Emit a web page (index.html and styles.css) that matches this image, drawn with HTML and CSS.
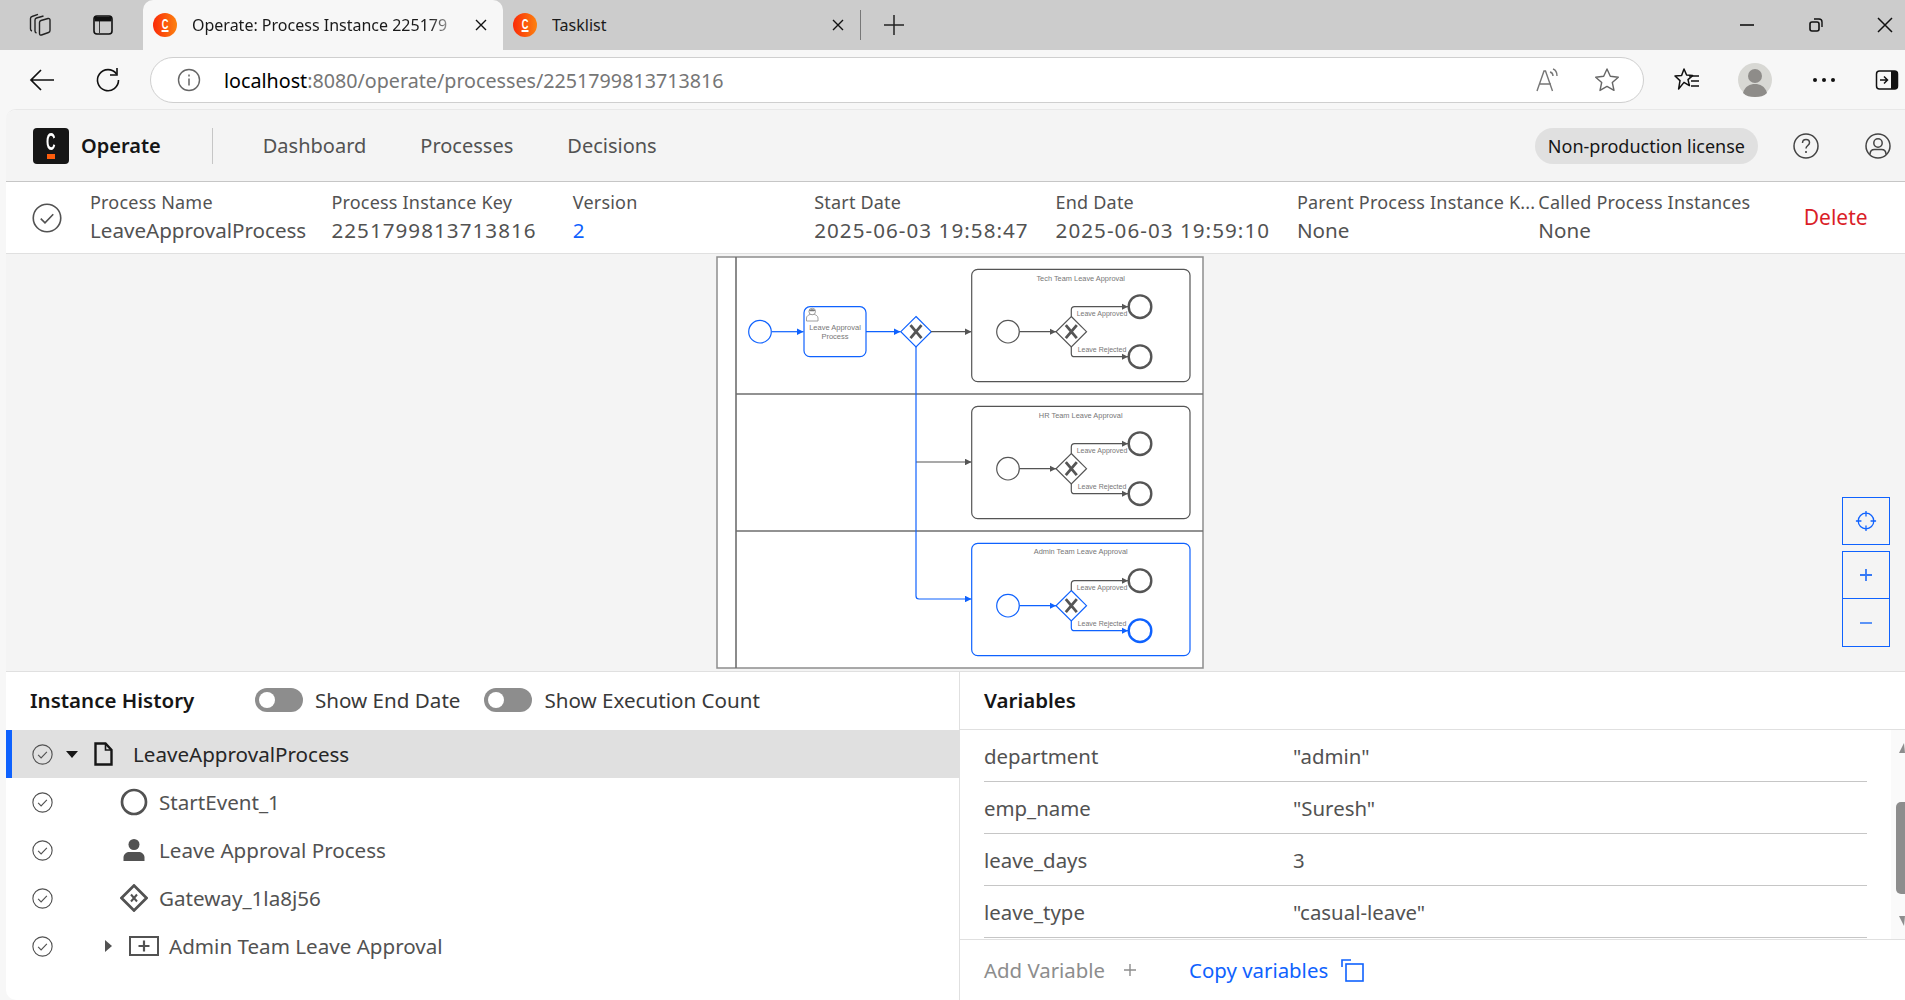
FILE: index.html
```html
<!DOCTYPE html>
<html lang="en">
<head>
    <meta charset="UTF-8">
    <title>Operate: Process Instance 2251799813713816</title>
    <link rel="stylesheet" href="styles.css">
</head>
<body>

<svg class="defs" width="0" height="0">
    <defs>
        <symbol id="check" viewBox="0 0 24 24">
            <circle cx="12" cy="12" r="11" fill="none" stroke="currentColor" stroke-width="1.3"/>
            <path d="M7 12.5l3.4 3.4L17 9" fill="none" stroke="currentColor" stroke-width="1.3"/>
        </symbol>
        <symbol id="camundaFav" viewBox="0 0 24 24">
            <circle cx="12" cy="12" r="12" fill="url(#favGrad)"/>
            <rect x="8.5" y="17" width="7" height="2" fill="#fff"/>
            <text transform="translate(12 15.5) scale(.62 1)" text-anchor="middle" class="favicon-c">C</text>
        </symbol>
        <linearGradient id="favGrad" x1="0" y1="0" x2="1" y2="0">
            <stop offset="0" stop-color="#fb2a08"/>
            <stop offset="1" stop-color="#fc8210"/>
        </linearGradient>
        <marker id="arrowGray" viewBox="0 0 10 10" refX="10" refY="5" markerWidth="6.5" markerHeight="6.5" markerUnits="userSpaceOnUse" orient="auto">
            <path d="M0 0L10 5L0 10z" fill="#555"/>
        </marker>
        <marker id="arrowBlue" viewBox="0 0 10 10" refX="10" refY="5" markerWidth="6.5" markerHeight="6.5" markerUnits="userSpaceOnUse" orient="auto">
            <path d="M0 0L10 5L0 10z" fill="#0f62fe"/>
        </marker>
        <g id="gwCross">
            <path d="M-5.5 -6.5L5.5 6.5M5.5 -6.5L-5.5 6.5" fill="none" stroke="#555" stroke-width="2.8"/>
        </g>
    </defs>
</svg>

<!-- browser chrome -->
<div class="tabbar">
    <div class="tabbar-left">
        <svg class="chrome-icon" viewBox="0 0 24 24"><path d="M12.5 9.5c0-1 .5-1.700 1.500-2l7-2c1.200-.3 2 .4 2 1.500v10.500c0 1-.5 1.700-1.500 2l-7 2.500c-1.200.4-2-.3-2-1.500zM9.500 20c-1-.3-1.500-1-1.500-2V7c0-1 .5-1.700 1.500-2l7-2M5 18c-1-.3-1.500-1-1.500-2V5.500c0-1 .5-1.700 1.500-2l6-2.200" fill="none" stroke="#222" stroke-width="1.4"/></svg>
        <svg class="chrome-icon" viewBox="0 0 24 24"><rect x="3" y="3" width="18" height="18" rx="3" fill="none" stroke="#111" stroke-width="1.6"/><path d="M4 4h16v4H4zM8.500 8v12" fill="#111" stroke="#111" stroke-width=".8"/></svg>
    </div>
    <div class="tab tab-active">
        <svg class="favicon"><use href="#camundaFav"/></svg>
        <span class="tab-title">Operate: Process Instance 225179</span>
        <svg class="tab-x" viewBox="0 0 14 14"><path d="M2 2l10 10M12 2L2 12" stroke="#111" stroke-width="1.4"/></svg>
    </div>
    <div class="tab">
        <svg class="favicon"><use href="#camundaFav"/></svg>
        <span class="tab-title">Tasklist</span>
        <svg class="tab-x" viewBox="0 0 14 14"><path d="M2 2l10 10M12 2L2 12" stroke="#111" stroke-width="1.4"/></svg>
    </div>
    <div class="tab-sep"></div>
    <svg class="new-tab" viewBox="0 0 22 22"><path d="M11 1v20M1 11h20" stroke="#222" stroke-width="1.5"/></svg>
    <div class="window-btns">
        <svg class="win-icon" viewBox="0 0 16 16"><path d="M1 8h14" stroke="#111" stroke-width="1.6"/></svg>
        <svg class="win-icon" viewBox="0 0 16 16"><rect x="2" y="5" width="9" height="9" rx="2" fill="none" stroke="#111" stroke-width="1.6"/><path d="M6 2h5c2 0 3 1 3 3v5" fill="none" stroke="#111" stroke-width="1.4"/></svg>
        <svg class="win-icon" viewBox="0 0 16 16"><path d="M1 1l14 14M15 1L1 15" stroke="#111" stroke-width="1.5"/></svg>
    </div>
</div>

<div class="toolbar">
    <svg class="tool-back" viewBox="0 0 26 24"><path d="M25 12H2M12 2L2 12l10 10" fill="none" stroke="#111" stroke-width="1.7"/></svg>
    <svg class="tool-reload" viewBox="0 0 26 26"><path d="M21.500 7A10.500 10.500 0 1 0 23.500 13" fill="none" stroke="#111" stroke-width="1.6"/><path d="M22 1v7h-7" fill="none" stroke="#111" stroke-width="1.6"/></svg>
    <div class="addressbar">
        <svg class="info-icon" viewBox="0 0 24 24"><circle cx="12" cy="12" r="10.500" fill="none" stroke="#666" stroke-width="1.400"/><path d="M12 10.500v7M12 6.500v2" stroke="#666" stroke-width="1.500"/></svg>
        <span class="url"><span class="url-host">localhost</span>:8080/operate/processes/2251799813713816</span>
        <svg class="read-icon" viewBox="0 0 26 26"><path d="M2 24L9 4h1.500l7 20M5 17h11" fill="none" stroke="#777" stroke-width="1.400"/><path d="M15 5c2 .5 3 2 3 4M18 2c3 1 4 4 4 7" fill="none" stroke="#777" stroke-width="1.400"/></svg>
        <svg class="star-icon" viewBox="0 0 26 26"><path d="M13 2l3.300 7.300 8 .9-6 5.300 1.700 7.900-7-4-7 4 1.700-7.900-6-5.300 8-.9z" fill="none" stroke="#666" stroke-width="1.400" stroke-linejoin="round"/></svg>
    </div>
    <svg class="fav-icon" viewBox="0 0 26 26"><path d="M10 2l2.600 6 6 .6-4.600 4 1.400 6-5.400-3.200L4.600 22l1.400-8.400L1 9l6.600-.6z" fill="none" stroke="#111" stroke-width="1.500" stroke-linejoin="round"/><path d="M15 9h10M17 14h8M17 19h8" stroke="#111" stroke-width="1.500"/></svg>
    <div class="avatar">
        <svg viewBox="0 0 34 34"><circle cx="17" cy="17" r="17" fill="#d8d8d4"/><circle cx="17" cy="13" r="7" fill="#8e8c89"/><path d="M5 30c2-7 7-9 12-9s10 2 12 9c-3 3-7 4-12 4s-9-1-12-4z" fill="#8e8c89"/></svg>
    </div>
    <div class="dots"><i></i><i></i><i></i></div>
    <svg class="side-icon" viewBox="0 0 24 24"><rect x="1.500" y="3" width="21" height="18" rx="3" fill="none" stroke="#111" stroke-width="1.500"/><path d="M16 3h4c1.500 0 3 1 3 3v12c0 2-1.500 3-3 3h-4z" fill="#111"/><path d="M5 12h7M9 8.500l3.500 3.500L9 15.500" fill="none" stroke="#111" stroke-width="1.500"/></svg>
</div>

<!-- page -->
<div class="page">
    <header class="app-header">
        <div class="logo"><span class="logo-c">C</span><span class="logo-bar"></span></div>
        <span class="app-name">Operate</span>
        <div class="header-divider"></div>
        <nav class="main-nav">
            <a href="#">Dashboard</a>
            <a href="#">Processes</a>
            <a href="#">Decisions</a>
        </nav>
        <div class="header-right">
            <span class="license">Non-production license</span>
            <svg class="header-icon" viewBox="0 0 26 26"><circle cx="13" cy="13" r="12" fill="none" stroke="#444" stroke-width="1.500"/><path d="M9.500 10c0-2.200 1.500-3.500 3.500-3.500s3.500 1.300 3.500 3.200c0 2.800-3.500 2.800-3.500 5.800" fill="none" stroke="#444" stroke-width="1.500"/><circle cx="13" cy="19" r="1.100" fill="#444"/></svg>
            <svg class="header-icon header-icon-user" viewBox="0 0 26 26"><circle cx="13" cy="13" r="12" fill="none" stroke="#444" stroke-width="1.500"/><circle cx="13" cy="10" r="4.200" fill="none" stroke="#444" stroke-width="1.500"/><path d="M5 21.500c0-3.500 2-5 4.500-5h7c2.500 0 4.500 1.500 4.500 5" fill="none" stroke="#444" stroke-width="1.500"/></svg>
        </div>
    </header>

    <section class="instance-bar">
        <svg class="instance-check"><use href="#check"/></svg>
        <div class="meta">
            <div class="meta-col"><span class="meta-label">Process Name</span><span class="meta-value">LeaveApprovalProcess</span></div>
            <div class="meta-col"><span class="meta-label">Process Instance Key</span><span class="meta-value meta-num">2251799813713816</span></div>
            <div class="meta-col"><span class="meta-label">Version</span><span class="meta-value link">2</span></div>
            <div class="meta-col"><span class="meta-label">Start Date</span><span class="meta-value meta-num">2025-06-03 19:58:47</span></div>
            <div class="meta-col"><span class="meta-label">End Date</span><span class="meta-value meta-num">2025-06-03 19:59:10</span></div>
            <div class="meta-col"><span class="meta-label">Parent Process Instance K...</span><span class="meta-value">None</span></div>
            <div class="meta-col"><span class="meta-label">Called Process Instances</span><span class="meta-value">None</span></div>
        </div>
        <button class="delete-btn">Delete</button>
    </section>

    <section class="diagram-area">
        <svg class="diagram" viewBox="716 256 488 413" width="488" height="413">
            <defs>
                <g id="subInner">
                    <circle cx="1008" cy="331.700" r="11.300" class="el"/>
                    <path d="M1019.500 331.700H1056" class="flow" marker-end="url(#arrowGray)"/>
                    <path d="M1071.300 316.500L1086.500 331.700L1071.300 347L1056 331.700z" class="el"/>
                    <use href="#gwCross" x="1071.300" y="331.700"/>
                    <path d="M1071.300 316.500V310c0-2 1-3.300 3.300-3.300H1128" class="flow" marker-end="url(#arrowGray)"/>
                    <path d="M1071.300 347v6.400c0 2 1 3.300 3.300 3.300H1128" class="flow" marker-end="url(#arrowGray)"/>
                    <circle cx="1140" cy="306.700" r="11.300" class="el end"/>
                    <circle cx="1140" cy="356.700" r="11.300" class="el end"/>
                    <text x="1102" y="316" class="lbl">Leave Approved</text>
                    <text x="1102" y="352" class="lbl">Leave Rejected</text>
                </g>
            </defs>
            <!-- pool and lanes -->
            <rect x="717" y="257" width="486" height="411" class="pool"/>
            <path d="M736 257V668M736 394H1203M736 531H1203" class="lane"/>

            <!-- main flow -->
            <circle cx="760" cy="331.700" r="11.300" class="el active"/>
            <path d="M772 331.700H803.500" class="flow active" marker-end="url(#arrowBlue)"/>
            <rect x="804" y="306.700" width="62" height="50" rx="6" class="el active"/>
            <path d="M806.500 321v-3c0-2 2-3 3.500-3.500h4.500c1.500.5 3.500 1.500 3.500 3.500v3z" fill="#fff" stroke="#888" stroke-width=".8"/>
            <circle cx="812.200" cy="311.500" r="3.300" fill="#fff" stroke="#888" stroke-width=".8"/>
            <path d="M809 311c.5-2.500 5.500-2.500 6.400 0c-2 .3-4.400 .3-6.400 0z" fill="#777"/>
            <text x="835" y="330" class="lbl wide">Leave Approval</text>
            <text x="835" y="339" class="lbl wide">Process</text>
            <path d="M866 331.700H900.500" class="flow active" marker-end="url(#arrowBlue)"/>
            <path d="M916 316.500L931.200 331.700L916 347L900.800 331.700z" class="el active"/>
            <use href="#gwCross" x="916" y="331.700"/>
            <path d="M931 331.700H971.500" class="flow" marker-end="url(#arrowGray)"/>
            <path d="M916 462H971.500" class="flow" marker-end="url(#arrowGray)"/>
            <path d="M916 347V596c0 2 1 3 3 3H971.500" class="flow active" marker-end="url(#arrowBlue)"/>

            <!-- tech team -->
            <rect x="971.700" y="269.300" width="218.300" height="112.400" rx="6" class="el"/>
            <text x="1080.700" y="281" class="lbl title">Tech Team Leave Approval</text>
            <use href="#subInner"/>

            <!-- hr team -->
            <rect x="971.700" y="406.300" width="218.300" height="112.400" rx="6" class="el"/>
            <text x="1080.700" y="418" class="lbl title">HR Team Leave Approval</text>
            <use href="#subInner" y="137"/>

            <!-- admin team, the path that was taken -->
            <rect x="971.700" y="543.300" width="218.300" height="112.400" rx="6" class="el active"/>
            <text x="1080.700" y="554" class="lbl title">Admin Team Leave Approval</text>
            <circle cx="1008" cy="605.700" r="11.300" class="el active"/>
            <path d="M1019.500 605.700H1056" class="flow active" marker-end="url(#arrowBlue)"/>
            <path d="M1071.300 590.500L1086.500 605.700L1071.300 621L1056 605.700z" class="el active"/>
            <use href="#gwCross" x="1071.300" y="605.700"/>
            <path d="M1071.300 590.500V584c0-2 1-3.300 3.300-3.300H1128" class="flow" marker-end="url(#arrowGray)"/>
            <path d="M1071.300 621v6.400c0 2 1 3.300 3.300 3.300H1128" class="flow active" marker-end="url(#arrowBlue)"/>
            <circle cx="1140" cy="580.700" r="11.300" class="el end"/>
            <circle cx="1140" cy="630.700" r="11.300" class="el end active"/>
            <text x="1102" y="590" class="lbl">Leave Approved</text>
            <text x="1102" y="626" class="lbl">Leave Rejected</text>
        </svg>

        <div class="diagram-controls">
            <button class="ctrl-btn">
                <svg viewBox="0 0 24 24" width="22" height="22"><circle cx="12" cy="12" r="8.500" fill="none" stroke="#0f62fe" stroke-width="1.400"/><path d="M12 1v6M12 17v6M1 12h6M17 12h6" stroke="#0f62fe" stroke-width="1.400"/></svg>
            </button>
            <div class="ctrl-group">
                <button class="ctrl-btn">
                    <svg viewBox="0 0 14 14" width="14" height="14"><path d="M7 1v12M1 7h12" stroke="#3478f6" stroke-width="1.800"/></svg>
                </button>
                <button class="ctrl-btn ctrl-btn-last">
                    <svg viewBox="0 0 14 14" width="14" height="14"><path d="M1 7h12" stroke="#4a88f7" stroke-width="1.800"/></svg>
                </button>
            </div>
        </div>
    </section>

    <section class="bottom">
        <div class="history">
            <div class="panel-head">
                <h2 class="panel-title history-title">Instance History</h2>
                <div class="toggle"><i></i></div>
                <span class="toggle-label">Show End Date</span>
                <div class="toggle toggle-second"><i></i></div>
                <span class="toggle-label">Show Execution Count</span>
            </div>
            <div class="tree-row selected">
                <svg class="row-check"><use href="#check"/></svg>
                <span class="caret-down"></span>
                <svg class="row-doc" viewBox="0 0 19 24"><path d="M1.500 1.500h10l6 6.500v14.500h-16z" fill="none" stroke="#161616" stroke-width="2.400"/><path d="M11.500 1.500V8h6" fill="none" stroke="#161616" stroke-width="1.600"/></svg>
                <span class="row-text row-text-root">LeaveApprovalProcess</span>
            </div>
            <div class="tree-row">
                <svg class="row-check"><use href="#check"/></svg>
                <svg class="row-icon" viewBox="0 0 28 28"><circle cx="14" cy="14" r="12" fill="none" stroke="#525252" stroke-width="2.700"/></svg>
                <span class="row-text">StartEvent_1</span>
            </div>
            <div class="tree-row">
                <svg class="row-check"><use href="#check"/></svg>
                <svg class="row-icon" viewBox="0 0 28 28"><circle cx="14" cy="8.500" r="5.500" fill="#525252"/><path d="M3.500 25v-3.500c0-3.500 3-5.500 6-5.500h9c3 0 6 2 6 5.500V25z" fill="#525252"/></svg>
                <span class="row-text">Leave Approval Process</span>
            </div>
            <div class="tree-row">
                <svg class="row-check"><use href="#check"/></svg>
                <svg class="row-icon" viewBox="0 0 28 28"><path d="M14 1.500L26.500 14L14 26.500L1.500 14z" fill="none" stroke="#525252" stroke-width="2.700"/><path d="M11 10.500l6 7M17 10.500l-6 7" stroke="#525252" stroke-width="2"/></svg>
                <span class="row-text">Gateway_1la8j56</span>
            </div>
            <div class="tree-row">
                <svg class="row-check"><use href="#check"/></svg>
                <span class="caret-right"></span>
                <svg class="row-sub" viewBox="0 0 30 20"><rect x="1" y="1" width="28" height="18" fill="none" stroke="#525252" stroke-width="2"/><path d="M15 4.500v11M9.500 10h11" stroke="#525252" stroke-width="2.200"/></svg>
                <span class="row-text row-text-sub">Admin Team Leave Approval</span>
            </div>
        </div>

        <div class="variables">
            <div class="panel-head">
                <h2 class="panel-title">Variables</h2>
            </div>
            <div class="var-scroll">
                <div class="var-list">
                    <div class="var-row"><span class="var-name">department</span><span>"admin"</span></div>
                    <div class="var-row"><span class="var-name">emp_name</span><span>"Suresh"</span></div>
                    <div class="var-row"><span class="var-name">leave_days</span><span>3</span></div>
                    <div class="var-row"><span class="var-name">leave_type</span><span>"casual-leave"</span></div>
                </div>
                <div class="scrollbar">
                    <span class="scroll-up"></span>
                    <span class="scroll-thumb"></span>
                    <span class="scroll-down"></span>
                </div>
            </div>
            <div class="var-footer">
                <span class="add-var">Add Variable</span>
                <svg class="add-plus" viewBox="0 0 14 14"><path d="M7 1v12M1 7h12" stroke="#8d8d8d" stroke-width="1.400"/></svg>
                <span class="copy-var">Copy variables</span>
                <svg class="copy-icon" viewBox="0 0 23 23"><rect x="5" y="5" width="17" height="17" fill="none" stroke="#0f62fe" stroke-width="1.600"/><path d="M1 8V1h9" fill="none" stroke="#0f62fe" stroke-width="1.600"/></svg>
            </div>
        </div>
    </section>
</div>

</body>
</html>
```

FILE: styles.css
```css
* {
    box-sizing: border-box;
}

html, body {
    margin: 0;
    padding: 0;
    height: 1000px;
    overflow: hidden;
}

body {
    width: 1905px;
    background: #f7f7f7;
    font-family: "Noto Sans", sans-serif;
    color: #525252;
}

.defs {
    display: block;
    height: 0;
}

/* tab strip */
.tabbar {
    height: 50px;
    background: #cccccc;
    display: flex;
    align-items: center;
}

.tabbar-left {
    width: 143px;
    display: flex;
    padding-left: 27px;
    gap: 40px;
}

.chrome-icon {
    width: 24px;
    height: 24px;
}

.tab {
    width: 360px;
    height: 50px;
    display: flex;
    align-items: center;
    padding: 0 6px 0 10px;
    font-size: 16px;
    color: #1a1a1a;
}

.tab-active {
    background: #f7f7f7;
    border-radius: 10px 10px 0 0;
    padding-right: 3px;
}

.favicon {
    width: 24px;
    height: 24px;
    flex: none;
}

.favicon-c {
    font-family: "Liberation Sans", sans-serif;
    font-size: 15px;
    font-weight: 700;
    fill: #fff;
}

.tab-title {
    margin-left: 15px;
    flex: 1;
    overflow: hidden;
    white-space: nowrap;
}

.tab-active .tab-title {
    -webkit-mask-image: linear-gradient(to right, #000 88%, transparent);
    mask-image: linear-gradient(to right, #000 88%, transparent);
}

.tab-x {
    width: 14px;
    height: 14px;
    margin: 0 12px;
    flex: none;
}

.tab + .tab-sep {
    margin-left: -3px;
}

.tab-sep {
    width: 1px;
    height: 30px;
    background: #777;
}

.new-tab {
    width: 22px;
    height: 22px;
    margin-left: 22px;
}

.window-btns {
    margin-left: auto;
    display: flex;
    gap: 53px;
    padding-right: 12px;
}

.win-icon {
    width: 16px;
    height: 16px;
}

/* address bar row */
.toolbar {
    height: 59px;
    display: flex;
    align-items: center;
    position: relative;
}

.tool-back {
    width: 26px;
    height: 24px;
    margin-left: 29px;
}

.tool-reload {
    width: 26px;
    height: 26px;
    margin-left: 40px;
}

.addressbar {
    width: 1494px;
    height: 46px;
    margin-left: 29px;
    margin-top: 1px;
    background: #fff;
    border: 1.5px solid #cfcfcf;
    border-radius: 23px;
    display: flex;
    align-items: center;
    padding-left: 26px;
}

.info-icon {
    width: 24px;
    height: 24px;
}

.url {
    margin-left: 23px;
    font-size: 19.7px;
    color: #767676;
}

.url-host {
    color: #000;
}

.read-icon {
    width: 26px;
    height: 26px;
    margin-left: auto;
}

.star-icon {
    width: 26px;
    height: 26px;
    margin: 0 23px 0 33px;
}

.fav-icon {
    width: 26px;
    height: 26px;
    margin-left: 30px;
}

.avatar {
    width: 34px;
    height: 34px;
    margin-left: 38px;
}

.avatar svg {
    display: block;
}

.dots {
    display: flex;
    gap: 5px;
    margin-left: 41px;
}

.dots i {
    width: 4px;
    height: 4px;
    border-radius: 50%;
    background: #111;
}

.side-icon {
    width: 24px;
    height: 24px;
    margin-left: 40px;
}

/* page content */
.page {
    margin-left: 6px;
    width: 1899px;
    height: 891px;
    background: #fff;
    border-radius: 10px 0 0 10px;
    overflow: hidden;
    display: flex;
    flex-direction: column;
    border-top: 1px solid #e8e8e8;
}

.app-header {
    height: 72px;
    flex: none;
    background: #f4f4f4;
    border-bottom: 1.5px solid #c6c6c6;
    display: flex;
    align-items: center;
    padding-left: 27px;
    padding-right: 14px;
}

.logo {
    width: 36px;
    height: 36px;
    background: #161616;
    border-radius: 4px;
    display: flex;
    flex-direction: column;
    align-items: center;
    justify-content: flex-end;
    padding-bottom: 5px;
}

.logo-c {
    font-family: "Liberation Sans", sans-serif;
    color: #fff;
    font-size: 24px;
    font-weight: 700;
    line-height: 18px;
    transform: scaleX(.55);
}

.logo-bar {
    width: 8px;
    height: 5px;
    background: #fc5d0d;
    margin-top: 3px;
}

.app-name {
    margin-left: 12px;
    font-size: 20px;
    font-weight: 600;
    color: #161616;
}

.header-divider {
    width: 1px;
    height: 36px;
    background: #c6c6c6;
    margin-left: 51px;
}

.main-nav {
    display: flex;
    gap: 54px;
    margin-left: 50px;
}

.main-nav a {
    font-size: 20px;
    color: #525252;
    text-decoration: none;
}

.header-right {
    margin-left: auto;
    display: flex;
    align-items: center;
}

.license {
    background: #e0e0e0;
    color: #161616;
    height: 36px;
    line-height: 36px;
    border-radius: 18px;
    padding: 0 13px;
    font-size: 18px;
}

.header-icon {
    width: 26px;
    height: 26px;
    margin-left: 35px;
}

.header-icon-user {
    margin-left: 46px;
}

.instance-bar {
    height: 72px;
    flex: none;
    background: #fff;
    border-bottom: 1.5px solid #e0e0e0;
    display: flex;
    align-items: center;
    padding-left: 26px;
}

.instance-check {
    width: 30px;
    height: 30px;
    color: #525252;
    flex: none;
}

.meta {
    display: grid;
    grid-template-columns: repeat(7, 241.4px);
    margin-left: 28px;
    margin-top: -1px;
}

.meta-col {
    display: flex;
    flex-direction: column;
    min-width: 0;
}

.meta-label {
    font-size: 18px;
    line-height: 26px;
    letter-spacing: .2px;
    white-space: nowrap;
}

.meta-value {
    font-size: 20.6px;
    line-height: 30px;
    white-space: nowrap;
}

.meta-num {
    letter-spacing: 1.05px;
}

.link {
    color: #0f62fe;
}

.delete-btn {
    background: none;
    border: none;
    padding: 0;
    margin-left: 24px;
    margin-top: -2px;
    font-family: inherit;
    font-size: 21px;
    color: #da1e28;
}

.diagram-area {
    height: 418px;
    flex: none;
    background: #f4f4f4;
    border-bottom: 1.5px solid #e0e0e0;
    position: relative;
    display: flex;
    justify-content: flex-start;
    padding: 2px 0 0 710px;
}

.diagram {
    display: block;
}

.diagram .pool {
    fill: #fff;
    stroke: #8d8d8d;
    stroke-width: 1.5;
}

.diagram .lane {
    fill: none;
    stroke: #6f6f6f;
    stroke-width: 1.6;
}

.diagram .el {
    fill: #fff;
    stroke: #555;
    stroke-width: 1.2;
}

.diagram .end {
    stroke-width: 2.4;
}

.diagram .flow {
    fill: none;
    stroke: #555;
    stroke-width: 1.2;
}

.diagram .active {
    stroke: #0f62fe;
}

.diagram .lbl {
    font-family: "Liberation Sans", sans-serif;
    font-size: 7px;
    fill: #777;
    text-anchor: middle;
}

.diagram .title {
    font-size: 7.4px;
}

.diagram .wide {
    font-size: 7.5px;
}

/* fit, zoom in and zoom out, floating over the diagram */
.diagram-controls {
    position: absolute;
    right: 15px;
    top: 243px;
    display: flex;
    flex-direction: column;
    gap: 6px;
}

.ctrl-btn {
    width: 48px;
    height: 48px;
    background: #f4f4f4;
    border: 1.5px solid #0f62fe;
    padding: 0;
    display: flex;
    align-items: center;
    justify-content: center;
}

.ctrl-group {
    display: flex;
    flex-direction: column;
}

.ctrl-btn-last {
    border-top: none;
}

.bottom {
    flex: 1;
    display: flex;
    min-height: 0;
}

.history {
    width: 954px;
    flex: none;
    border-right: 1.5px solid #e0e0e0;
}

.variables {
    flex: 1;
    display: flex;
    flex-direction: column;
    min-width: 0;
}

.panel-head {
    height: 58px;
    display: flex;
    align-items: center;
    padding-left: 24px;
    padding-bottom: 2px;
}

.variables .panel-head {
    border-bottom: 1.5px solid #e0e0e0;
}

.panel-title {
    margin: 0;
    font-size: 20.5px;
    font-weight: 600;
    color: #161616;
}

.history-title {
    width: 225px;
}

.toggle {
    width: 48px;
    height: 24px;
    border-radius: 12px;
    background: #8d8d8d;
    padding: 4px;
    flex: none;
}

.toggle i {
    display: block;
    width: 16px;
    height: 16px;
    border-radius: 50%;
    background: #fff;
}

.toggle-second {
    margin-left: 24px;
}

.toggle-label {
    margin-left: 12px;
    font-size: 20.6px;
    color: #393939;
}

.tree-row {
    height: 48px;
    display: flex;
    align-items: center;
    padding-left: 26px;
    font-size: 20.6px;
}

.tree-row.selected {
    background: #e0e0e0;
    border-left: 6px solid #0f62fe;
    padding-left: 20px;
    color: #262626;
}

.row-check {
    width: 21px;
    height: 21px;
    flex: none;
    color: #525252;
}

.row-icon {
    width: 28px;
    height: 28px;
    margin-left: 67px;
    flex: none;
}

.row-text {
    margin-left: 11px;
    white-space: nowrap;
}

.row-text-root {
    margin-left: 20px;
}

.row-text-sub {
    margin-left: 10px;
}

.caret-down {
    width: 0;
    height: 0;
    border-left: 6px solid transparent;
    border-right: 6px solid transparent;
    border-top: 7px solid #161616;
    margin-left: 13px;
    flex: none;
}

.caret-right {
    width: 0;
    height: 0;
    border-top: 6px solid transparent;
    border-bottom: 6px solid transparent;
    border-left: 7px solid #525252;
    margin-left: 52px;
    flex: none;
}

.row-doc {
    width: 19px;
    height: 24px;
    margin-left: 16px;
    flex: none;
}

.row-sub {
    width: 30px;
    height: 20px;
    margin-left: 17px;
    flex: none;
}

.var-scroll {
    flex: none;
    height: 210px;
    display: flex;
    border-bottom: 1.5px solid #e0e0e0;
}

.var-list {
    width: 907px;
    padding-left: 24px;
    margin-top: 0;
}

.var-row {
    height: 52px;
    display: flex;
    align-items: center;
    border-bottom: 1.5px solid #c6c6c6;
    font-size: 20.4px;
    color: #525252;
}

.var-name {
    width: 309px;
    flex: none;
}

.scrollbar {
    margin-left: auto;
    width: 14px;
    background: #fafafa;
    position: relative;
    display: flex;
    flex-direction: column;
    align-items: flex-end;
    padding-top: 13px;
}

.scroll-up, .scroll-down {
    width: 0;
    height: 0;
    border-left: 5px solid transparent;
    border-right: 1px solid transparent;
    flex: none;
}

.scroll-up {
    border-bottom: 10px solid #8d8d8d;
}

.scroll-thumb {
    width: 9px;
    height: 92px;
    background: #8d8d8d;
    border-radius: 5px 0 0 5px;
    margin-top: 49px;
}

.scroll-down {
    border-top: 10px solid #8d8d8d;
    margin-top: 22px;
}

.var-footer {
    flex: 1;
    display: flex;
    align-items: center;
    padding-left: 24px;
    padding-bottom: 0;
    font-size: 20.4px;
}

.add-var {
    color: #8d8d8d;
}

.add-plus {
    width: 14px;
    height: 14px;
    margin-left: 18px;
}

.copy-var {
    color: #0f62fe;
    margin-left: 52px;
}

.copy-icon {
    width: 23px;
    height: 23px;
    margin-left: 13px;
}
```
